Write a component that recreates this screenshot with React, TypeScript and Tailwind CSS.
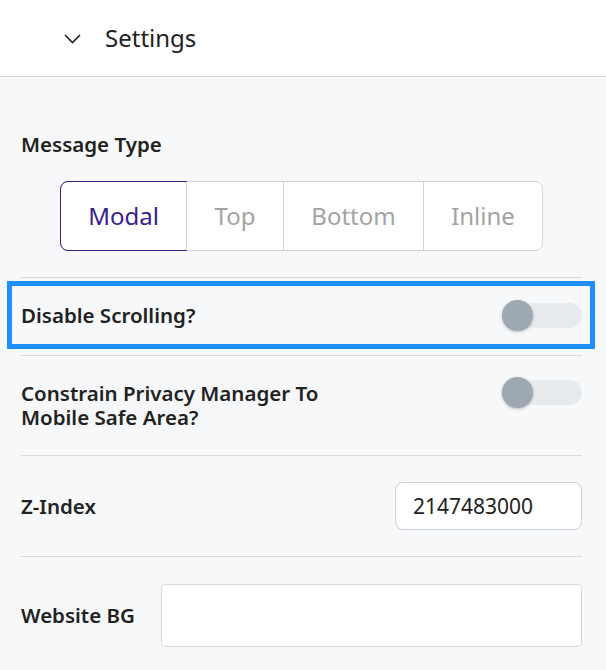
import { useState } from "react";

const FONT = { fontFamily: '"Noto Sans", "Open Sans", sans-serif' };

function Toggle({ on, onChange }: { on: boolean; onChange: () => void }) {
  return (
    <button
      type="button"
      onClick={onChange}
      className="relative flex h-[31px] w-[80px] shrink-0 items-center"
      aria-pressed={on}
    >
      <span className="absolute left-0 right-0 h-[25px] rounded-full bg-[#e8ebee]" />
      <span
        className={`absolute h-[31px] w-[31px] rounded-full bg-[#9ea8b3] shadow-[0_1px_3px_rgba(0,0,0,0.25)] ${
          on ? "left-[49px]" : "left-0"
        }`}
      />
    </button>
  );
}

const TYPES = ["Modal", "Top", "Bottom", "Inline"];
const WIDTHS = ["w-[127px]", "w-[97px]", "w-[140px]", "w-[119px]"];

export default function App() {
  const [type, setType] = useState("Modal");
  const [noScroll, setNoScroll] = useState(false);
  const [safeArea, setSafeArea] = useState(false);

  return (
    <div className="min-h-[670px] w-[606px] bg-[#f7f8fa] text-[#222]" style={FONT}>
      <div className="flex h-[77px] items-center border-b border-[#d9d9d9] bg-white pl-[64px]">
        <svg width="17" height="10" viewBox="0 0 17 10" fill="none" className="mt-[1px]">
          <path d="M1 1l7.5 7.5L16 1" stroke="#222" strokeWidth="1.6" />
        </svg>
        <span className="ml-[24px] text-[24px] leading-none">Settings</span>
      </div>

      <div className="pl-[21px] pr-[24px]">
        <div className="pt-[54px] text-[20.5px] font-semibold leading-[26px]">Message Type</div>

        <div className="ml-[39px] mt-[24px] flex h-[70px] w-[483px] rounded-[8px] border border-[#cfd4d9] bg-white">
          {TYPES.map((t, i) => {
            const active = t === type;
            return (
              <button
                key={t}
                type="button"
                onClick={() => setType(t)}
                className={`${WIDTHS[i]} flex items-center justify-center text-[24px] ${
                  i > 0 ? "border-l border-[#cfd4d9]" : ""
                } ${
                  active
                    ? "-m-px rounded-l-[8px] border border-[#3a1d8f] text-[#3a1d8f]"
                    : "text-[#a3a3a3]"
                }`}
              >
                {t}
              </button>
            );
          })}
        </div>

        <div className="mt-[26px] border-t border-[#d9d9d9]" />

        <div className="-ml-[14px] -mr-[13px] mt-[3px] flex h-[68px] items-center justify-between border-[5px] border-[#1e8fff] pl-[9px] pr-[8px]">
          <span className="text-[20.5px] font-semibold">Disable Scrolling?</span>
          <Toggle on={noScroll} onChange={() => setNoScroll(!noScroll)} />
        </div>

        <div className="mt-[6px] flex items-start justify-between border-t border-[#d9d9d9] pb-[26px] pt-[25px]">
          <span className="w-[330px] text-[20.5px] font-semibold leading-[24px]">
            Constrain Privacy Manager To Mobile Safe Area?
          </span>
          <div className="-mt-[4px]">
            <Toggle on={safeArea} onChange={() => setSafeArea(!safeArea)} />
          </div>
        </div>

        <div className="flex items-center justify-between border-t border-[#d9d9d9] py-[26px]">
          <span className="text-[20.5px] font-semibold">Z-Index</span>
          <input
            defaultValue="2147483000"
            className="h-[48px] w-[187px] rounded-[8px] border border-[#ccd1d6] bg-white px-[17px] text-[21px] text-[#222] outline-none"
          />
        </div>

        <div className="flex items-center gap-[26px] border-t border-[#d9d9d9] pt-[27px]">
          <span className="text-[20.5px] font-semibold">Website BG</span>
          <input className="h-[63px] flex-1 rounded-[4px] border border-[#d5d9de] bg-white px-[12px] text-[21px] outline-none" />
        </div>
      </div>
    </div>
  );
}
